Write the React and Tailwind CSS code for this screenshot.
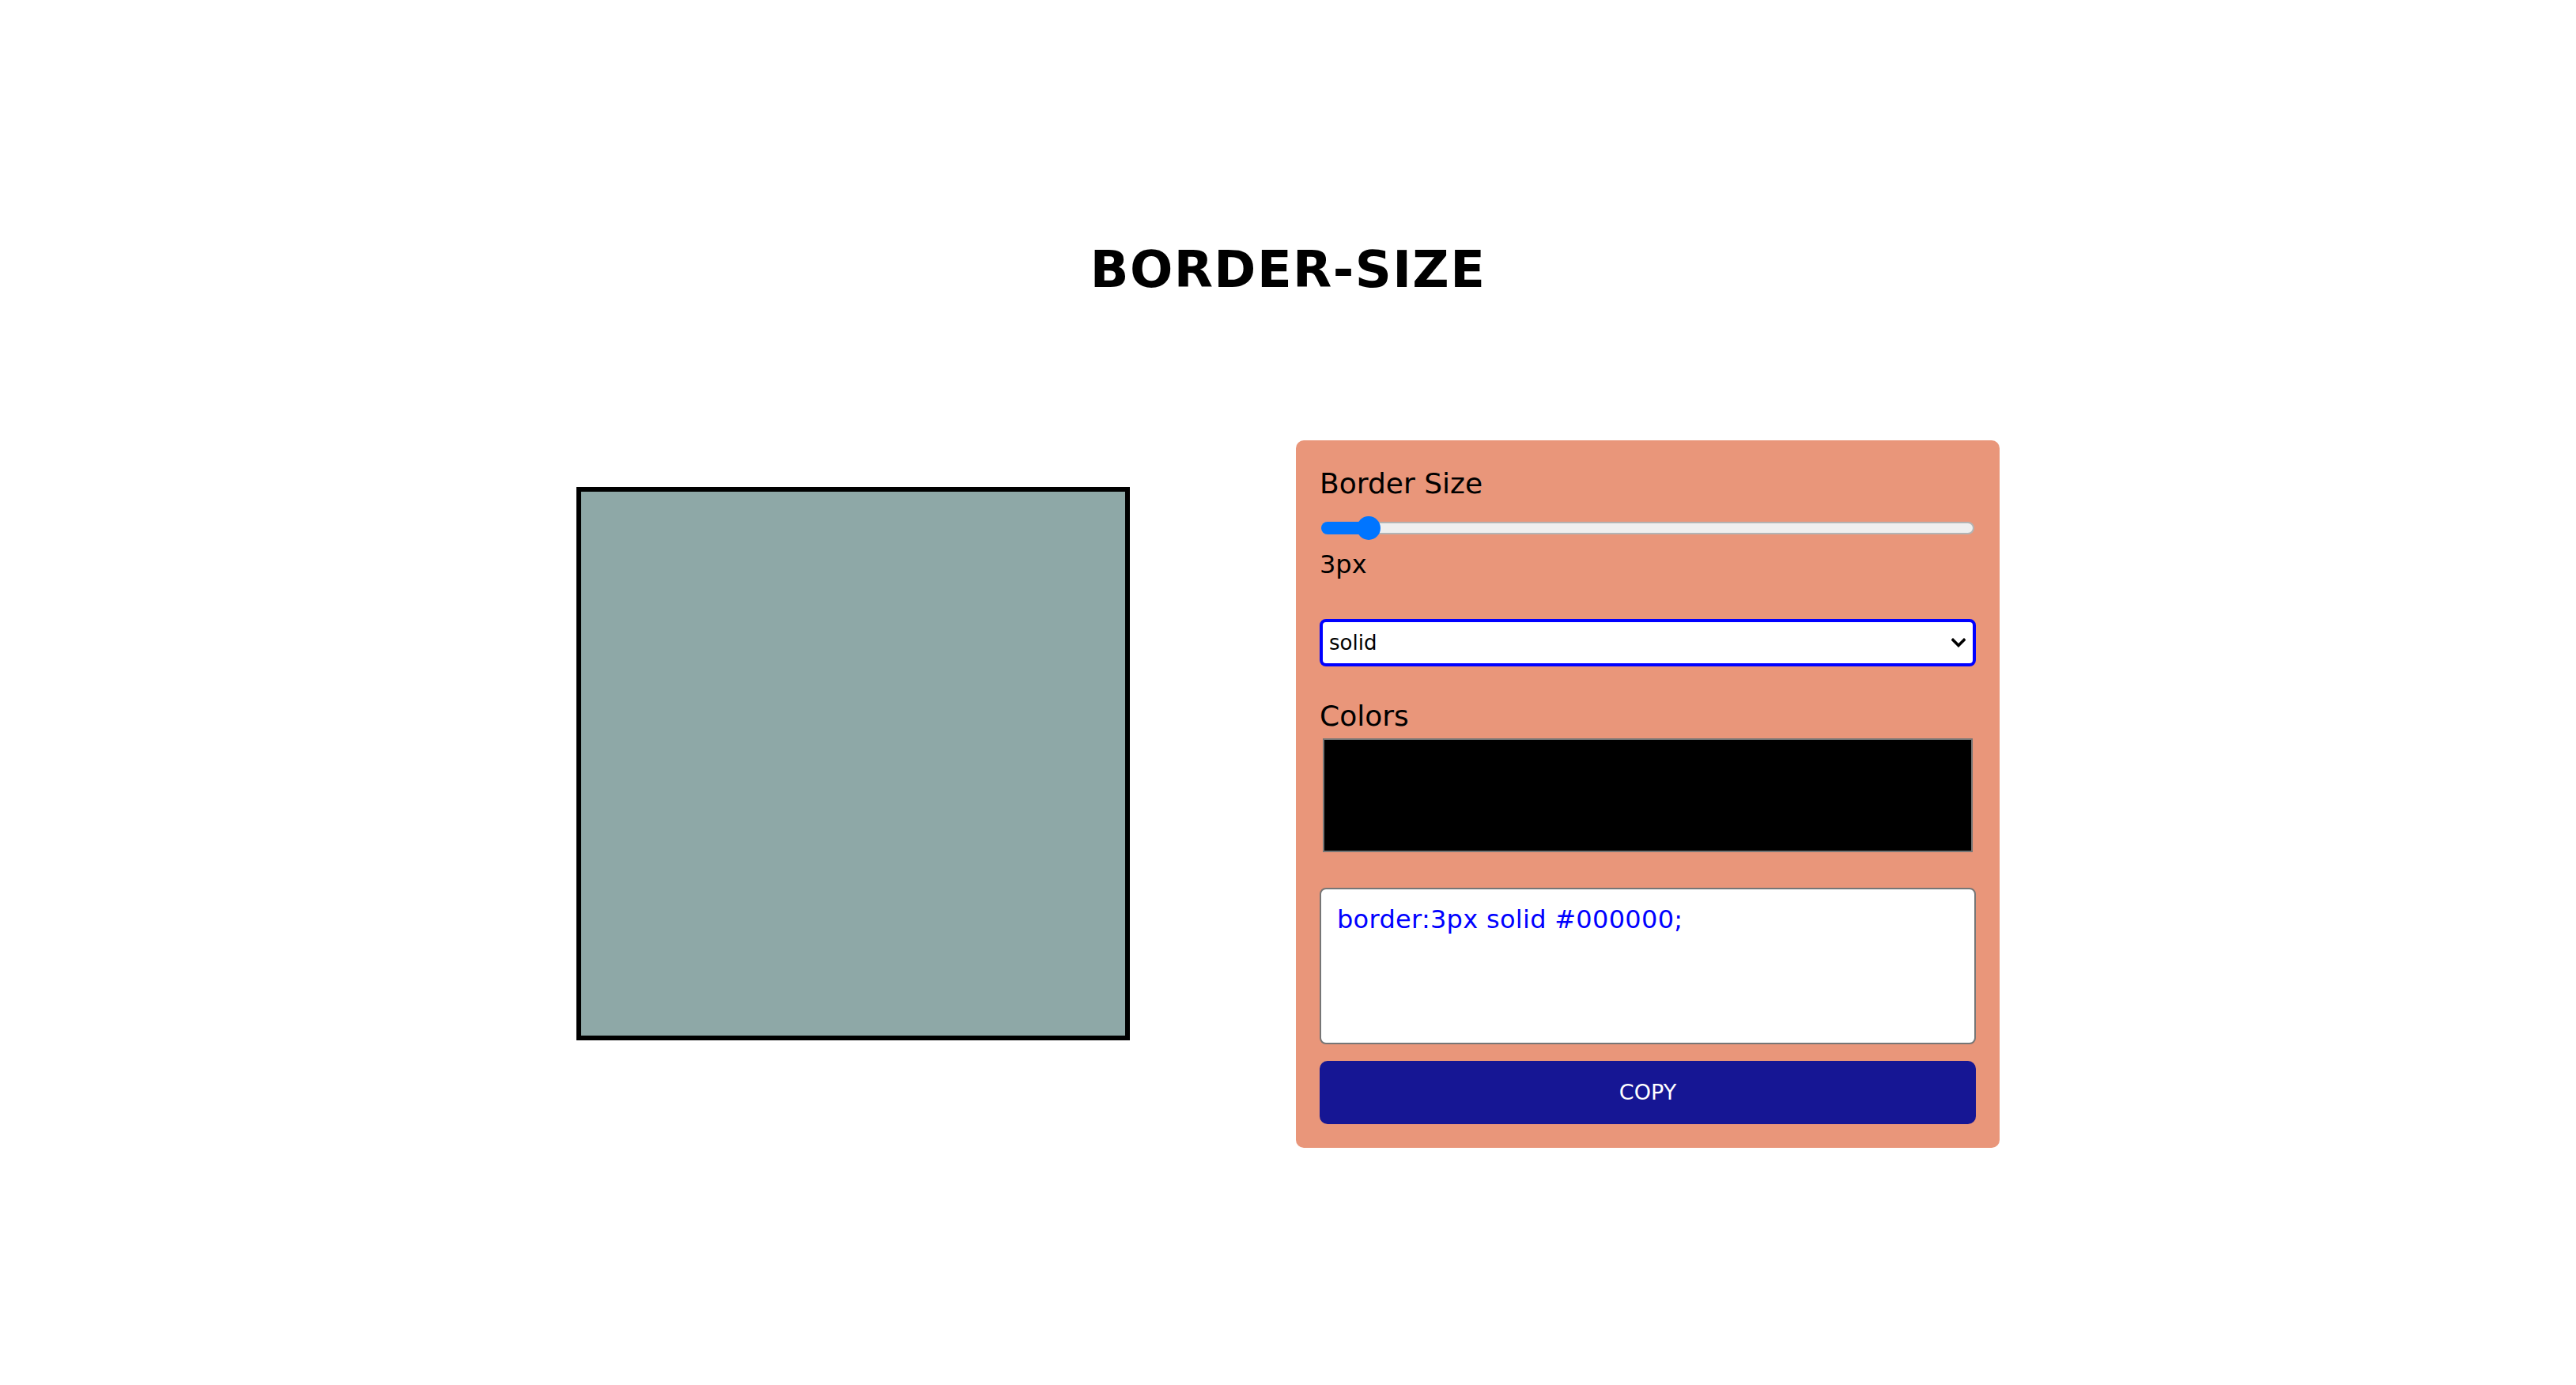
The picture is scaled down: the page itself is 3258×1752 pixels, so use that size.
import React from "react";

export default function App() {
  return (
    <div className="min-h-screen bg-white font-['DejaVu_Sans',sans-serif] text-black pt-[304px]">
      <h1 className="text-center text-[64px] leading-[75px] font-bold tracking-[1.4px]">BORDER-SIZE</h1>
      <div className="mt-[178px] flex items-start justify-center gap-[210px]">
        <div className="mt-[59px] h-[700px] w-[700px] shrink-0 border-[6px] border-black bg-[#8ea8a7]" />
        <div className="flex w-[890px] shrink-0 flex-col rounded-[10px] bg-[#e9967a] px-[30px] pt-[34px] pb-[30px]">
          <div className="text-[36px] leading-[42px]">Border Size</div>
          <div className="mt-[20px] flex h-[30px] items-center">
            <div className="relative mx-[2px] h-[16px] flex-1 rounded-full border-2 border-[#b3b3b3] bg-[#efefef]">
              <div className="absolute -left-[2px] -top-[2px] -bottom-[2px] w-[62px] rounded-full bg-[#0075ff]" />
              <div className="absolute left-[43px] top-1/2 h-[30px] w-[30px] -translate-y-1/2 rounded-full bg-[#0075ff]" />
            </div>
          </div>
          <div className="mt-[13px] text-[32px] leading-[37px]">3px</div>
          <div className="mt-[50px] flex h-[60px] items-center justify-between rounded-[8px] border-4 border-[#0000ff] bg-white pl-[8px] pr-[9px] text-[26px]">
            <span>solid</span>
            <svg width="18" height="12" viewBox="0 0 18 12" fill="none">
              <path d="M2 2.5 L9 9.5 L16 2.5" stroke="black" strokeWidth="3.6" strokeLinecap="square" />
            </svg>
          </div>
          <div className="mt-[42px] text-[36px] leading-[42px]">Colors</div>
          <div className="mx-[4px] mt-[7px] h-[144px] border-2 border-[#767676] bg-black" />
          <div className="mt-[45px] h-[198px] rounded-[8px] border-2 border-[#767676] bg-white p-[20px] text-[32px] leading-[37px] tracking-[0.3px] text-[#0000ff]">
            border:3px solid #000000;
          </div>
          <button className="mt-[21px] flex h-[80px] items-center justify-center rounded-[10px] bg-[#161694] text-[27px] text-white">
            COPY
          </button>
        </div>
      </div>
    </div>
  );
}
